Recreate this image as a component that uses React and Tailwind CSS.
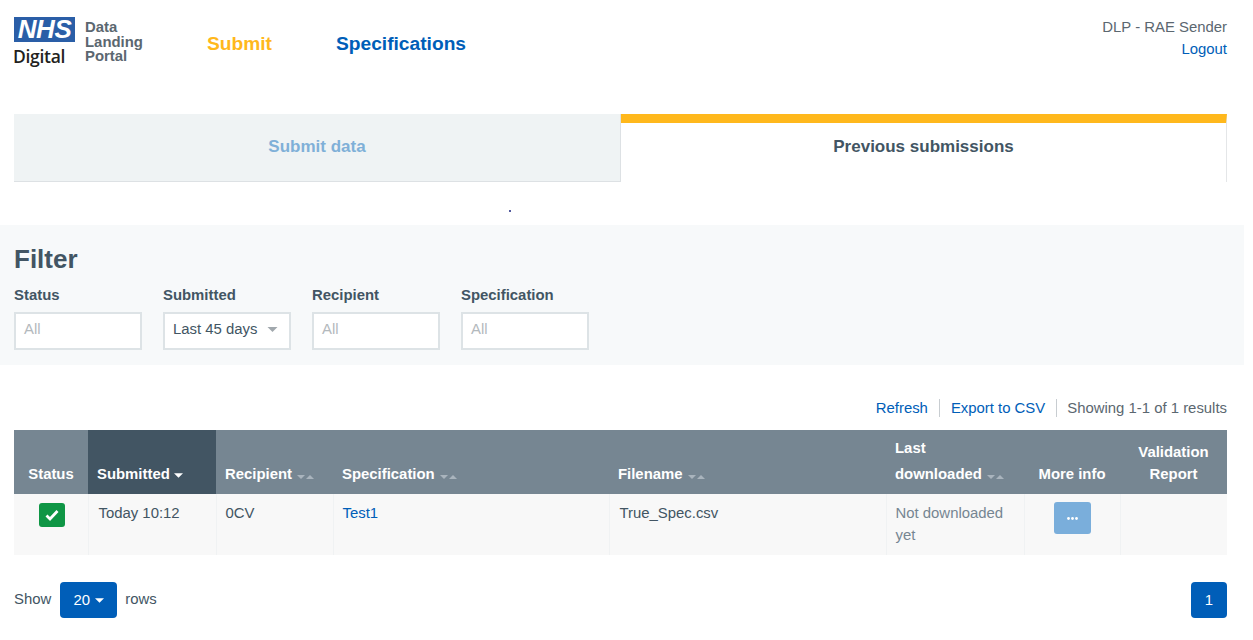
const FONT = "font-['Liberation_Sans',Arial,sans-serif]";

function SortIcon() {
  return (
    <svg width="17" height="6" viewBox="0 0 17 6" className="ml-[5px] inline-block align-[-1px]">
      <path d="M0 1h8L4 5z" fill="#a9b4bd" />
      <path d="M9 5h8l-4-4z" fill="#a9b4bd" />
    </svg>
  );
}

function Caret({ color = "#fff", w = 10 }) {
  return (
    <svg width={w} height="5" viewBox="0 0 10 5" className="inline-block align-[1px]">
      <path d="M0 0h10L5 5z" fill={color} />
    </svg>
  );
}

function Field({ label, value, placeholder = "All", caret }) {
  return (
    <div className="w-[128px]">
      <div className="mb-[7px] text-[14.9px] font-bold leading-[20px] text-[#425563]">{label}</div>
      <div className="flex h-[38px] items-center justify-between border-2 border-[#dde3e6] bg-white pb-[4px] pl-[8px] pr-[11px] text-[14.9px]">
        <span className={value ? "text-[#425563]" : "text-[#b3b9bd]"}>{value || placeholder}</span>
        {caret && <Caret color="#a1a8ad" w={11} />}
      </div>
    </div>
  );
}

const cols = [
  { id: "status", w: "w-[74px]" },
  { id: "submitted", w: "w-[128px]" },
  { id: "recipient", w: "w-[117px]" },
  { id: "specification", w: "w-[276px]" },
  { id: "filename", w: "w-[277px]" },
  { id: "downloaded", w: "w-[138px]" },
  { id: "more", w: "w-[96px]" },
  { id: "validation", w: "w-[107px]" },
];

function Th({ children, className = "", center }) {
  return (
    <th className={`border-0 px-[9px] pb-[7px] align-bottom text-[14.9px] font-bold leading-[26px] text-white ${center ? "text-center" : "text-left"} ${className}`}>
      {children}
    </th>
  );
}

function Td({ children, className = "" }) {
  return (
    <td className={`border-l border-[#f0f2f3] px-[9px] pt-[8px] align-top text-[14.9px] leading-[22px] first:border-l-0 ${className}`}>
      {children}
    </td>
  );
}

export default function App() {
  return (
    <div className={`${FONT} h-[640px] w-[1253px] overflow-hidden bg-white text-[14.9px] text-[#425563]`}>
      {/* Header */}
      <header className="flex h-[114px] items-start pl-[14px] pr-[26px]">
        <div className="mt-[17px] w-[61px]">
          <div className="flex h-[25px] w-[61px] items-center justify-center bg-[#2a5ea7] text-[26px] font-bold italic leading-[25px] tracking-[-0.4px] text-white">NHS</div>
          <div className="-ml-[1px] mt-[4px] font-['Open_Sans',sans-serif] text-[17.5px] font-semibold leading-[20px] tracking-[-0.3px] text-[#231f20]">Digital</div>
        </div>
        <div className="ml-[10px] mt-[20px] text-[14.9px] font-bold leading-[14.5px] text-[#5b6770]">
          <div>Data</div>
          <div>Landing</div>
          <div>Portal</div>
        </div>
        <nav className="mt-[32px] flex text-[19.2px] font-bold leading-[24px]">
          <a className="ml-[64px] text-[#ffb81c]">Submit</a>
          <a className="ml-[64px] text-[#005eb8]">Specifications</a>
        </nav>
        <div className="ml-auto mt-[17px] text-right leading-[21.5px]">
          <div className="text-[#5b6770]">DLP - RAE Sender</div>
          <a className="text-[#005eb8]">Logout</a>
        </div>
      </header>

      {/* Tabs */}
      <div className="ml-[14px] flex h-[68px] w-[1213px]">
        <div className="flex w-[607px] items-center justify-center border-b border-r border-[#dde1e4] bg-[#eff3f4] pb-[2px] text-[17px] font-bold text-[#7fb0d8]">
          Submit data
        </div>
        <div className="flex w-[606px] items-center justify-center border-r border-t-[9px] border-[#e4e6e8] border-t-[#ffb81c] bg-white pb-[11px] text-[17px] font-bold text-[#425563]">
          Previous submissions
        </div>
      </div>

      {/* Stray dot */}
      <div className="relative h-[43px]">
        <span className="absolute left-[509px] top-[28px] h-[2px] w-[2px] rounded-full bg-[#1a237e]" />
      </div>

      {/* Filter */}
      <section className="h-[140px] w-[1244px] bg-[#f7f9fa] px-[14px] pt-[18px]">
        <h2 className="text-[26px] font-bold leading-[32px] text-[#425563]">Filter</h2>
        <div className="mt-[10px] flex gap-[21px]">
          <Field label="Status" />
          <Field label="Submitted" value="Last 45 days" caret />
          <Field label="Recipient" />
          <Field label="Specification" />
        </div>
      </section>

      {/* Results toolbar */}
      <div className="flex h-[65px] items-start justify-end pr-[26px] pt-[34px] leading-[18px]">
        <a className="border-r border-[#c8cdd1] pr-[11px] text-[#005eb8]">Refresh</a>
        <a className="border-r border-[#c8cdd1] px-[11px] text-[#005eb8]">Export to CSV</a>
        <span className="pl-[10px] text-[#5b6770]">Showing 1-1 of 1 results</span>
      </div>

      {/* Table */}
      <table className="ml-[14px] w-[1213px] table-fixed border-collapse">
        <colgroup>
          {cols.map((c) => (
            <col key={c.id} className={c.w} />
          ))}
        </colgroup>
        <thead>
          <tr className="h-[64px] bg-[#768692]">
            <Th center>Status</Th>
            <Th className="bg-[#425563]">
              Submitted <Caret w={9} />
            </Th>
            <Th>Recipient<SortIcon /></Th>
            <Th>Specification<SortIcon /></Th>
            <Th>Filename<SortIcon /></Th>
            <Th>Last<br />downloaded<SortIcon /></Th>
            <Th center>More info</Th>
            <Th center className="!pb-[9px] !leading-[22px]">Validation<br />Report</Th>
          </tr>
        </thead>
        <tbody>
          <tr className="h-[61px] bg-[#f8f8f8]">
            <Td className="!pl-[11px] !pt-[9px] text-center">
              <span className="inline-flex h-[24px] w-[26px] items-center justify-center rounded-[3px] bg-[#0f9645]">
                <svg width="14" height="12" viewBox="0 0 14 12">
                  <path d="M1.5 6.5L5 10l7.5-8" fill="none" stroke="#fff" strokeWidth="2.8" />
                </svg>
              </span>
            </Td>
            <Td className="!pl-[10px]">Today 10:12</Td>
            <Td>0CV</Td>
            <Td><a className="text-[#005eb8]">Test1</a></Td>
            <Td className="!pl-[10px]">True_Spec.csv</Td>
            <Td className="text-[#768692]">Not downloaded yet</Td>
            <Td className="text-center">
              <span className="inline-flex h-[32px] w-[37px] items-center justify-center rounded-[3px] bg-[#7aaedb]">
                <svg width="11" height="3" viewBox="0 0 11 3">
                  <circle cx="1.5" cy="1.5" r="1.4" fill="#fff" />
                  <circle cx="5.5" cy="1.5" r="1.4" fill="#fff" />
                  <circle cx="9.5" cy="1.5" r="1.4" fill="#fff" />
                </svg>
              </span>
            </Td>
            <Td />
          </tr>
        </tbody>
      </table>

      {/* Footer */}
      <div className="mt-[27px] flex items-center pl-[14px] pr-[26px]">
        <span className="pb-[2px]">Show</span>
        <span className="ml-[9px] flex h-[36px] w-[57px] items-center justify-center gap-[5px] rounded-[4px] bg-[#005eb8] text-white">
          20 <Caret w={9} />
        </span>
        <span className="ml-[8px] pb-[2px]">rows</span>
        <span className="ml-auto flex h-[36px] w-[36px] items-center justify-center rounded-[4px] bg-[#005eb8] text-white">1</span>
      </div>
    </div>
  );
}
